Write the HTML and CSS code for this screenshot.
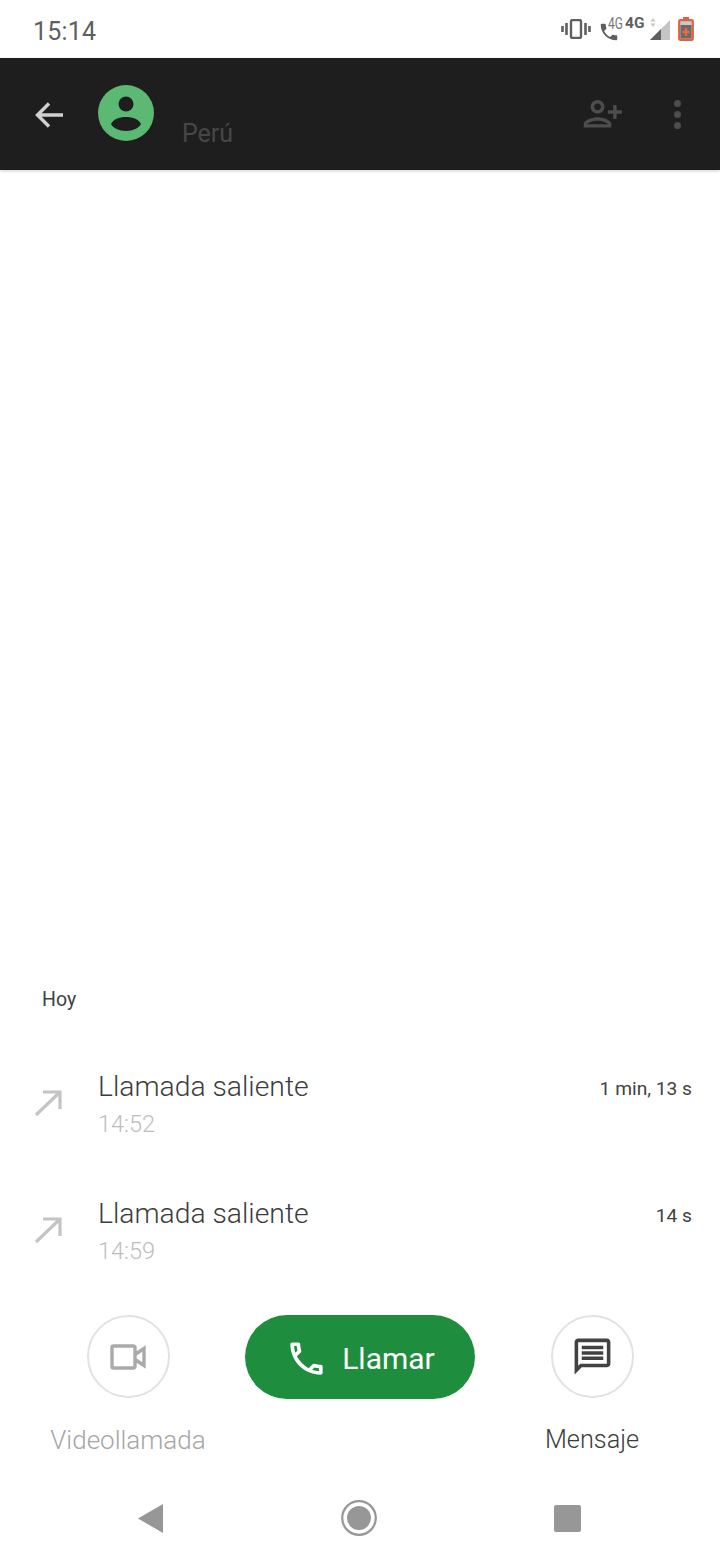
FILE: index.html
```html
<!DOCTYPE html>
<html lang="es">
<head>
  <meta charset="UTF-8">
  <meta name="viewport" content="width=device-width, initial-scale=1.0">
  <title>Detalle de llamada</title>
  <link rel="stylesheet" href="styles.css">
</head>
<body>
  <div class="estado">
    <span class="hora">15:14</span>
    <div class="estado-iconos">
      <svg class="ico-vibrar" viewBox="0 0 30 20" width="30" height="20">
        <rect x="10" y="1" width="10" height="18" rx="1.500" fill="none" stroke="#5f5f5f" stroke-width="2.400"/>
        <path d="M5.500 4v12M1.500 7v6M24.500 4v12M28.500 7v6" stroke="#5f5f5f" stroke-width="2.600" fill="none"/>
      </svg>
      <div class="llamada-4g">
        <svg viewBox="0 0 24 24" width="22" height="22"><path fill="#5f5f5f" d="M6.600 10.800c1.400 2.800 3.800 5.100 6.600 6.600l2.200-2.200c.3-.3.700-.4 1-.2 1.100.4 2.300.6 3.600.6.600 0 1 .4 1 1V20c0 .6-.4 1-1 1C10.600 21 3 13.400 3 4c0-.6.400-1 1-1h3.500c.6 0 1 .4 1 1 0 1.300.2 2.500.6 3.600.1.300 0 .7-.2 1z"/></svg>
        <span class="red-chica">4G</span>
      </div>
      <span class="red-grande">4G</span>
      <svg class="ico-flechas" viewBox="0 0 6 9" width="6" height="9"><path d="M3 0l2.500 3.500h-5zM3 9L.5 5.500h5z" fill="#c8c8c8"/></svg>
      <svg class="ico-senal" viewBox="0 0 20 20" width="20" height="20">
        <path d="M20 0v20H0z" fill="#c4c4c4"/>
        <path d="M11 9v11H0z" fill="#5f5f5f"/>
      </svg>
      <svg class="ico-bateria" viewBox="0 0 16 24" width="16" height="24">
        <path d="M5 0h6v3H5z" fill="#e0623c"/>
        <rect x="1.200" y="3.200" width="13.600" height="19.600" rx="1" fill="#c9c9c9" stroke="#e0623c" stroke-width="2.200"/>
        <rect x="2.500" y="8" width="11" height="13.500" fill="#6a6a6a"/>
        <path d="M8 11v8M4.500 15h7" stroke="#ee6a40" stroke-width="2.400"/>
      </svg>
    </div>
  </div>

  <header class="cabecera">
    <svg class="ico-atras" viewBox="0 0 28 26" width="28" height="26">
      <path d="M28 13H3M14 1.500 2.500 13 14 24.500" fill="none" stroke="#d0d0d0" stroke-width="3.400"/>
    </svg>
    <svg class="avatar" viewBox="0 0 56 56" width="56" height="56">
      <circle cx="28" cy="28" r="28" fill="#5bb974"/>
      <circle cx="28" cy="19" r="7.500" fill="#1e1e1e"/>
      <path d="M13 39c2-4.500 8-7 15-7s13 2.500 15 7c-2 4-8 7-15 7s-13-3-15-7z" fill="#1e1e1e"/>
    </svg>
    <span class="pais">Perú</span>
    <svg class="ico-agregar" viewBox="0 0 24 24" width="41.500" height="41.500">
      <g transform="matrix(-1 0 0 1 24 0)"><path fill="#4d4d4d" d="M15 12c2.210 0 4-1.790 4-4s-1.790-4-4-4-4 1.790-4 4 1.790 4 4 4zm0-6c1.100 0 2 .9 2 2s-.9 2-2 2-2-.9-2-2 .9-2 2-2zm0 8c-2.670 0-8 1.340-8 4v2h16v-2c0-2.660-5.330-4-8-4zm-6 4c.22-.72 3.310-2 6-2 2.700 0 5.800 1.290 6 2H9zm-3-3v-3h3v-2H6V7H4v3H1v2h3v3h2z"/></g>
    </svg>
    <div class="puntos"><i></i><i></i><i></i></div>
  </header>

  <main class="contenido">
    <div class="dia">Hoy</div>

    <div class="fila">
      <svg class="ico-saliente" viewBox="0 0 28 28" width="28" height="28">
        <path d="M2 26 26 3M9 3h17v17" fill="none" stroke="#c4c4c4" stroke-width="3.200"/>
      </svg>
      <div class="fila-texto">
        <div class="titulo">Llamada saliente</div>
        <div class="subtitulo">14:52</div>
      </div>
      <div class="duracion">1 min, 13 s</div>
    </div>

    <div class="fila">
      <svg class="ico-saliente" viewBox="0 0 28 28" width="28" height="28">
        <path d="M2 26 26 3M9 3h17v17" fill="none" stroke="#c4c4c4" stroke-width="3.200"/>
      </svg>
      <div class="fila-texto">
        <div class="titulo">Llamada saliente</div>
        <div class="subtitulo">14:59</div>
      </div>
      <div class="duracion">14 s</div>
    </div>

    <div class="acciones">
      <div class="accion">
        <div class="circulo">
          <svg viewBox="0 0 36 26" width="36" height="26">
            <path d="M2 3.500a1.500 1.500 0 0 1 1.500-1.500h20a1.500 1.500 0 0 1 1.500 1.500v19a1.500 1.500 0 0 1-1.500 1.500h-20a1.500 1.500 0 0 1-1.500-1.500zM25 10.500l9-6v17l-9-6" fill="none" stroke="#aaa" stroke-width="3.400"/>
          </svg>
        </div>
        <span class="accion-texto apagado">Videollamada</span>
      </div>
      <button class="llamar">
        <svg viewBox="0 0 24 24" width="43" height="43"><path fill="#fff" d="M6.540 5c.06.89.21 1.760.45 2.590l-1.200 1.200c-.41-1.200-.67-2.470-.76-3.790h1.510m9.860 12.020c.85.24 1.720.39 2.600.45v1.490c-1.320-.09-2.590-.35-3.800-.75l1.200-1.190M7.500 3H4c-.55 0-1 .45-1 1 0 9.390 7.610 17 17 17 .55 0 1-.45 1-1v-3.490c0-.55-.45-1-1-1-1.240 0-2.450-.2-3.570-.57-.1-.04-.21-.05-.31-.05-.26 0-.51.1-.71.29l-2.200 2.200c-2.830-1.450-5.150-3.760-6.590-6.590l2.200-2.200c.28-.28.36-.67.25-1.020C8.700 6.450 8.500 5.250 8.500 4c0-.55-.45-1-1-1z"/></svg>
        Llamar
      </button>
      <div class="accion">
        <div class="circulo">
          <svg viewBox="0 0 24 24" width="43" height="43"><path fill="#424242" d="M20 4v12H5.170L4 17.170V4h16m0-2H4c-1.100 0-2 .9-2 2v18l4-4h14c1.100 0 2-.9 2-2V4c0-1.100-.9-2-2-2zm-2 10H6v2h12v-2zm0-3H6v2h12V9zm0-3H6v2h12V6z"/></svg>
        </div>
        <span class="accion-texto">Mensaje</span>
      </div>
    </div>
  </main>

  <nav class="navegacion">
    <svg viewBox="0 0 25 29" width="25" height="29"><path d="M0 14.500 25 0v29z" fill="#979797"/></svg>
    <svg viewBox="0 0 36 36" width="36" height="36">
      <circle cx="18" cy="18" r="16.800" fill="none" stroke="#979797" stroke-width="2.200"/>
      <circle cx="18" cy="18" r="12" fill="#979797"/>
    </svg>
    <svg viewBox="0 0 27 27" width="27" height="27"><rect width="27" height="27" rx="2" fill="#979797"/></svg>
  </nav>
</body>
</html>
```

FILE: styles.css
```css
* { box-sizing: border-box; margin: 0; padding: 0; }
body {
  width: 720px;
  height: 1560px;
  font-family: Roboto, 'Noto Sans', sans-serif;
  background: #fff;
  color: #424242;
  display: flex;
  flex-direction: column;
  overflow: hidden;
}

.estado {
  height: 58px;
  flex-shrink: 0;
  display: flex;
  align-items: center;
  justify-content: space-between;
  padding: 4px 26px 0 33px;
}
.hora { font-size: 25px; color: #5f5f5f; letter-spacing: 0.2px; }
.estado-iconos { display: flex; align-items: center; margin-top: -4px; }
.ico-vibrar { margin-right: 7px; }
.llamada-4g { position: relative; width: 27px; height: 22px; margin-top: 6px; }
.red-chica {
  position: absolute;
  left: 10px;
  top: -7px;
  font-size: 16px;
  color: #777;
  transform: scaleX(0.75);
  transform-origin: left;
}
.red-grande { font-size: 15.500px; font-weight: 700; color: #5f5f5f; margin: -12px 0 0 0; width: 20px; }
.ico-flechas { margin: -14px 0 0 5px; }
.ico-senal { margin-left: -6px; margin-top: 1px; }
.ico-bateria { margin-left: 8px; margin-top: -1px; }

.cabecera {
  height: 112px;
  flex-shrink: 0;
  background: #1e1e1e;
  display: flex;
  align-items: center;
  padding: 0 39.500px 0 35px;
  box-shadow: 0 1px 3px rgba(0,0,0,0.2);
}
.ico-atras { margin-top: 1px; }
.avatar { margin: -3px 0 0 35px; }
.pais {
  font-size: 25px;
  color: #474747;
  align-self: flex-end;
  margin: 0 0 22px 28px;
}
.ico-agregar { margin-left: auto; }
.puntos { display: flex; flex-direction: column; gap: 4px; margin-left: 50px; }
.puntos i { width: 7px; height: 7px; border-radius: 50%; background: #4d4d4d; }

.contenido {
  flex: 1;
  display: flex;
  flex-direction: column;
  justify-content: flex-end;
}
.dia { font-size: 19.500px; line-height: 22px; color: #424242; padding-left: 42px; margin-bottom: 50px; }
.fila {
  height: 127px;
  display: flex;
  align-items: flex-start;
  padding: 8px 28px 0 34px;
}
.ico-saliente { margin-top: 20px; }
.fila-texto { margin-left: 36px; flex: 1; }
.titulo { font-size: 28.300px; line-height: 36px; color: #3c3c3c; font-weight: 300; }
.subtitulo { font-size: 23.500px; line-height: 36px; color: #bdbdbd; margin-top: 1px; font-weight: 300; }
.duracion { font-size: 19.200px; line-height: 28px; color: #424242; margin-top: 6px; }

.acciones {
  display: flex;
  justify-content: center;
  align-items: flex-start;
  padding: 0 0 23px 0;
}
.accion { width: 200px; display: flex; flex-direction: column; align-items: center; }
.circulo {
  width: 83px;
  height: 83px;
  border-radius: 50%;
  border: 2px solid #e2e2e2;
  display: flex;
  align-items: center;
  justify-content: center;
}
.accion-texto { font-size: 25.300px; line-height: 34px; margin-top: 25px; color: #3c3c3c; font-weight: 300; }
.apagado { color: #a6a6a6; font-size: 26px; }
.llamar {
  width: 230px;
  height: 84px;
  border: none;
  border-radius: 42px;
  background: #1e8e3e;
  color: #fff;
  font-family: inherit;
  font-size: 30px;
  font-weight: 400;
  display: flex;
  align-items: center;
  justify-content: center;
  gap: 14px;
  margin: 0 17px;
  padding-top: 2px;
}

.navegacion {
  height: 80px;
  flex-shrink: 0;
  display: flex;
  align-items: center;
  justify-content: space-between;
  padding: 0 139px 4px 138px;
}
```
